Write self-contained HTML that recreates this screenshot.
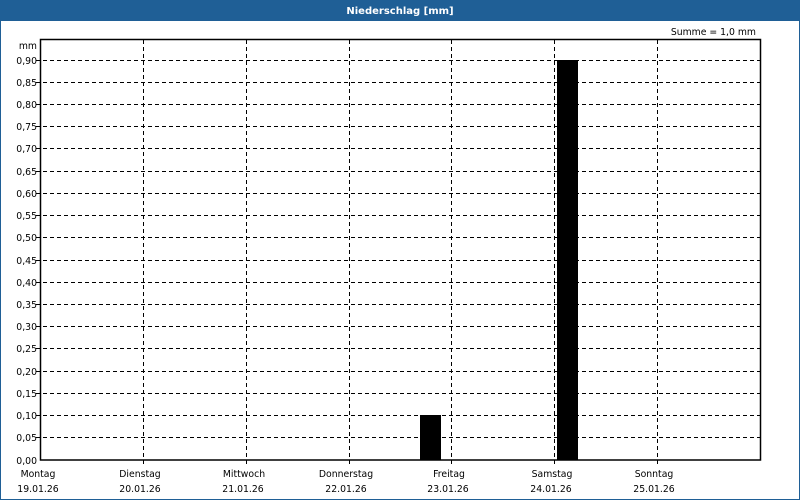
<!DOCTYPE html>
<html><head><meta charset="utf-8"><style>
html,body{margin:0;padding:0;background:#fff}
svg{display:block}
text{font-family:"DejaVu Sans","Liberation Sans",sans-serif;font-size:9.3px;fill:#000}
</style></head><body>
<svg width="800" height="500" xmlns="http://www.w3.org/2000/svg">
<rect x="0" y="0" width="800" height="500" fill="#fff"/>
<rect x="0" y="0" width="800" height="21" fill="#1f5f96"/>
<rect x="0.5" y="0.5" width="799" height="499" fill="none" stroke="#1f5f96"/>
<text x="400" y="14" text-anchor="middle" style="fill:#fff;font-weight:bold;font-size:10px">Niederschlag [mm]</text>
<text x="756" y="35" text-anchor="end">Summe = 1,0 mm</text>
<text x="37" y="49" text-anchor="end">mm</text>
<g stroke="#000" stroke-dasharray="4,3" stroke-width="1">
<path d="M36 437.5H760M36 415.5H760M36 393.5H760M36 371.5H760M36 348.5H760M36 326.5H760M36 304.5H760M36 282.5H760M36 260.5H760M36 237.5H760M36 215.5H760M36 193.5H760M36 171.5H760M36 148.5H760M36 126.5H760M36 104.5H760M36 82.5H760M36 60.5H760"/>
<path d="M143.5 40V464M246.5 40V464M349.5 40V464M451.5 40V464M554.5 40V464M657.5 40V464"/>
</g>
<rect x="420" y="415" width="21" height="45" fill="#000"/>
<rect x="557" y="60" width="21" height="400" fill="#000"/>
<rect x="40.5" y="39.5" width="720" height="420.5" fill="none" stroke="#000" stroke-width="1.5"/>
<g text-anchor="end">
<text x="37" y="464">0,00</text><text x="37" y="441">0,05</text><text x="37" y="419">0,10</text><text x="37" y="397">0,15</text><text x="37" y="375">0,20</text><text x="37" y="352">0,25</text><text x="37" y="330">0,30</text><text x="37" y="308">0,35</text><text x="37" y="286">0,40</text><text x="37" y="264">0,45</text><text x="37" y="241">0,50</text><text x="37" y="219">0,55</text><text x="37" y="197">0,60</text><text x="37" y="175">0,65</text><text x="37" y="152">0,70</text><text x="37" y="130">0,75</text><text x="37" y="108">0,80</text><text x="37" y="86">0,85</text><text x="37" y="64">0,90</text>
</g>
<g text-anchor="middle">
<text x="38" y="477">Montag</text><text x="38" y="492">19.01.26</text>
<text x="140" y="477">Dienstag</text><text x="140" y="492">20.01.26</text>
<text x="244" y="477">Mittwoch</text><text x="243" y="492">21.01.26</text>
<text x="346" y="477">Donnerstag</text><text x="346" y="492">22.01.26</text>
<text x="449" y="477">Freitag</text><text x="448" y="492">23.01.26</text>
<text x="552" y="477">Samstag</text><text x="551" y="492">24.01.26</text>
<text x="654" y="477">Sonntag</text><text x="654" y="492">25.01.26</text>
</g>
</svg>
</body></html>
